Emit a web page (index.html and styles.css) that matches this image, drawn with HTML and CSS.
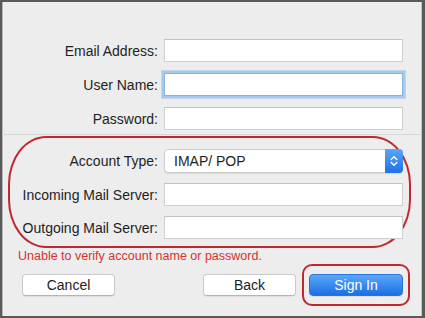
FILE: index.html
```html
<!DOCTYPE html>
<html>
<head>
<meta charset="utf-8">
<link rel="stylesheet" href="styles.css">
</head>
<body>
<div class="window">
  <div class="form-grid top">
    <label class="lbl">Email Address:</label>
    <div class="field"></div>
    <label class="lbl">User Name:</label>
    <div class="field focused"></div>
    <label class="lbl">Password:</label>
    <div class="field"></div>
  </div>
  <div class="separator"></div>
  <div class="oval">
    <div class="form-grid inner">
      <label class="lbl">Account Type:</label>
      <div class="select">
        <span class="select-text">IMAP/ POP</span>
        <span class="stepper">
          <svg width="8" height="12" viewBox="0 0 8 12"><path d="M1.2 4.6 L4 1.8 L6.8 4.6" fill="none" stroke="#fff" stroke-width="1.4" stroke-linecap="round" stroke-linejoin="round"/><path d="M1.2 7.4 L4 10.2 L6.8 7.4" fill="none" stroke="#fff" stroke-width="1.4" stroke-linecap="round" stroke-linejoin="round"/></svg>
        </span>
      </div>
      <label class="lbl">Incoming Mail Server:</label>
      <div class="field"></div>
      <label class="lbl">Outgoing Mail Server:</label>
      <div class="field"></div>
    </div>
  </div>
  <div class="error">Unable to verify account name or password.</div>
  <div class="buttons">
    <button class="btn">Cancel</button>
    <span class="spacer"></span>
    <button class="btn">Back</button>
    <div class="highlight">
      <button class="btn primary">Sign In</button>
    </div>
  </div>
</div>
</body>
</html>
```

FILE: styles.css
```css
html, body {
  margin: 0;
  padding: 0;
  background: #ececec;
}
.window {
  width: 425px;
  height: 318px;
  box-sizing: border-box;
  background: #ededed;
  border-top: 2px solid #5a5a5a;
  border-left: 2px solid #5a5a5a;
  border-right: 3px solid #5a5a5a;
  border-bottom: 2px solid #5a5a5a;
  box-shadow: inset 1px 0 0 #b8b8b8, inset -1px 0 0 #c4c4c4;
  font-family: "Liberation Sans", Arial, sans-serif;
  color: #1e1e1e;
  overflow: hidden;
}
.form-grid {
  display: grid;
  column-gap: 6px;
  align-items: center;
}
.form-grid.top {
  grid-template-columns: 156px 239px;
  grid-auto-rows: 23px;
  row-gap: 11px;
  padding-top: 37px;
}
.form-grid.inner {
  grid-template-columns: 148px 239px;
  grid-template-rows: 24px 23px 23px;
  row-gap: 10px;
  padding-top: 11px;
}
.lbl {
  font-size: 14px;
  text-align: right;
  white-space: nowrap;
  line-height: 16px;
}
.field {
  height: 23px;
  box-sizing: border-box;
  background: #fff;
  border: 1px solid #cfcfcf;
  border-top-color: #c2c2c2;
}
.field.focused {
  border-color: #86b2e6;
  box-shadow: 0 0 0 2px #a9c8ee, 0 0 0 3px rgba(150,190,235,0.5);
}
.separator {
  height: 1px;
  background: #d6d6d6;
  margin-top: 4px;
}
.oval {
  margin: 1px 11px 0 6px;
  height: 112px;
  box-sizing: border-box;
  border: 2px solid #c3272f;
  border-radius: 38px / 48px;
}
.select {
  height: 24px;
  box-sizing: border-box;
  background: #fff;
  border: 1px solid #cdcdcd;
  border-radius: 4px;
  display: flex;
  align-items: center;
  box-shadow: 0 1px 1px rgba(0,0,0,0.08);
}
.select-text {
  flex: 1;
  font-size: 14px;
  padding-left: 9px;
}
.stepper {
  width: 18px;
  height: 24px;
  margin: -1px -1px -1px 0;
  border-radius: 0 4px 4px 0;
  background: linear-gradient(#5aa6fa, #1f72e6);
  display: flex;
  align-items: center;
  justify-content: center;
}
.error {
  color: #d6312e;
  font-size: 12.5px;
  line-height: 16px;
  margin: 0 0 0 16px;
}
.buttons {
  display: flex;
  align-items: center;
  padding-left: 20px;
}
.spacer {
  width: 88px;
}
.btn {
  width: 93px;
  height: 22px;
  box-sizing: border-box;
  background: #fff;
  border: 1px solid #cacaca;
  border-bottom-color: #b5b5b5;
  border-radius: 4px;
  font-family: "Liberation Sans", Arial, sans-serif;
  font-size: 14px;
  color: #222;
  padding: 0;
  box-shadow: 0 1px 1px rgba(0,0,0,0.06);
}
.highlight {
  margin-left: 6px;
  padding: 8px 5px;
  border: 2px solid #c3272f;
  border-radius: 10px;
  display: flex;
}
.btn.primary {
  width: 94px;
  color: #fff;
  background: linear-gradient(#5aa8fb, #1b6fe4);
  border-color: #2a74d6;
}
```
